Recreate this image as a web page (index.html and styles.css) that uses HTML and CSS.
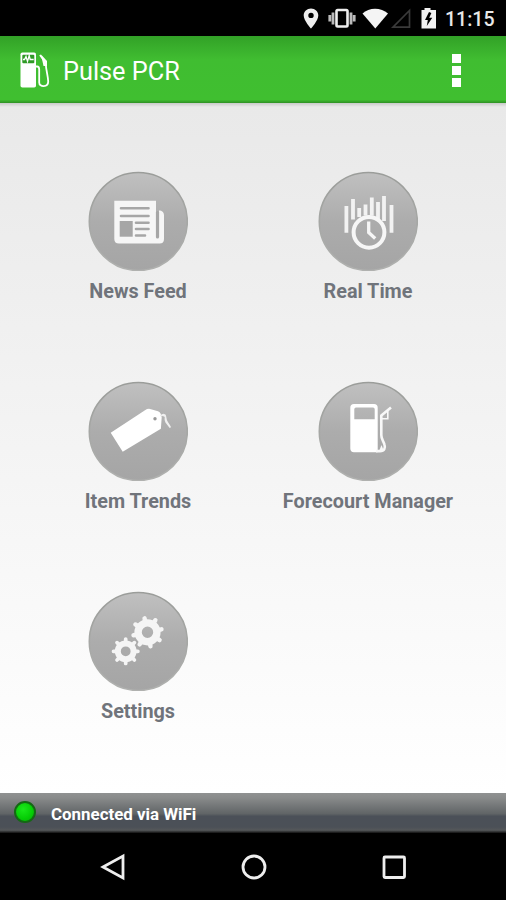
FILE: index.html
```html
<!DOCTYPE html>
<html lang="en">
<head>
    <meta charset="UTF-8">
    <meta name="viewport" content="width=device-width, initial-scale=1.0">
    <title>Pulse PCR</title>
    <link rel="stylesheet" href="styles.css">
</head>
<body>
    <div class="screen">
        <div class="status-bar">
            <svg class="status-icons" width="150" height="36" viewBox="0 0 150 36">
                <path fill="#eee" fill-rule="evenodd" d="M11 8.500c-4 0-7.300 3-7.300 7 0 5 7.300 13 7.300 13s7.300-8 7.300-13c0-4-3.300-7-7.300-7zm0 4.200a2.700 2.700 0 1 1 0 5.400 2.700 2.700 0 0 1 0-5.400z"/>
                <rect x="36.500" y="10" width="11" height="16.500" rx="1.200" fill="none" stroke="#eee" stroke-width="2.600"/>
                <path stroke="#bbb" stroke-width="2.800" d="M33 12.500v12M51 12.500v12M29.800 15v6.500M54.200 15v6.500"/>
                <path fill="#f4f4f4" d="M62.500 13.500c6.500-6.500 18.500-6.500 25.500 0L75.300 28.500z"/>
                <path fill="none" stroke="#3a3a3a" stroke-width="1.700" d="M93 27.200h16.500V10.500z"/>
                <path fill="#f2f2f2" d="M121.500 10h3V8h6v2h5.500v18.500h-14.500z"/>
                <path fill="#000" d="M129 12l-4 8h2.800l-1 6 5.500-8.200h-3.100l2.200-4.800z"/>
            </svg>
            <span class="clock">11:15</span>
        </div>

        <div class="app-bar">
            <svg class="app-logo" width="32" height="38" viewBox="0 0 32 38">
                <rect x="1.500" y="1.500" width="15.500" height="35" rx="1.800" fill="#fff"/>
                <rect x="3.300" y="3.700" width="12" height="8.500" rx="1" fill="#2f9a26"/>
                <path fill="none" stroke="#fff" stroke-width="1.300" d="M4 8.500h1.500l1.500-3 1.500 5 1.700-6 1 4h3.500"/>
                <path fill="none" stroke="#fff" stroke-width="1.800" d="M16 15.500h2.200c1.800 0 2 1 2 3v13c0 5 9 5 9-1 0-5-2.200-11-2.500-18.500L21 4"/>
                <path fill="#fff" d="M22 3.500l6 6.500v5h-3.500z"/>
            </svg>
            <h1 class="app-title">Pulse PCR</h1>
            <div class="menu-btn"><i></i><i></i><i></i></div>
        </div>

        <div class="menu-grid">
            <div class="menu-item">
                <svg class="menu-icon" viewBox="0 0 100 100">
                    <defs>
                        <linearGradient id="disc" x1="0" y1="0" x2="0" y2="1">
                            <stop offset="0" stop-color="#c0c0c0"/>
                            <stop offset="0.500" stop-color="#acacac"/>
                            <stop offset="1" stop-color="#a5a5a5"/>
                        </linearGradient>
                        <linearGradient id="rim" x1="0" y1="0" x2="0" y2="1">
                            <stop offset="0" stop-color="#9b9d9a"/>
                            <stop offset="1" stop-color="#b0b1af"/>
                        </linearGradient>
                    </defs>
                    <circle class="disc" cx="50.300" cy="50.500" r="49"/>
                    <path fill="#f6f6f6" d="M26.300 29.700H68V42h3v-2.500c3 0 5 1.500 5 5V68c0 3-1.500 4.500-4.500 4.500H31c-3 0-4.700-1.500-4.700-4.500z"/>
                    <path stroke="#a6a6a6" stroke-width="2.600" stroke-linecap="round" d="M33 37.300h27.500M33 45h27.500M48 51.700h12.500M48 58h12.500M48 64.500h9"/>
                    <path stroke="#a6a6a6" stroke-width="3.200" stroke-linecap="round" d="M69.500 41.500v24.500"/>
                    <rect x="31.700" y="50" width="13" height="15.700" fill="#a6a6a6"/>
                </svg>
                <span class="menu-label">News Feed</span>
            </div>

            <div class="menu-item">
                <svg class="menu-icon" viewBox="0 0 100 100">
                    <circle class="disc" cx="50.300" cy="50.500" r="49"/>
                    <path stroke="#f2f2f2" stroke-width="3.800" d="M28.400 35v26.700M35 28v20.500M41.200 37v9M47.500 33.500v11M53.800 26.500v18M60 31v17M66 25v25M73.500 34v27.700"/>
                    <circle cx="51" cy="61.300" r="15.400" fill="none" stroke="#f6f6f6" stroke-width="4"/>
                    <path fill="none" stroke="#f6f6f6" stroke-width="3.300" d="M50.700 50.500V61.500l6.500 6"/>
                </svg>
                <span class="menu-label">Real Time</span>
            </div>

            <div class="menu-item">
                <svg class="menu-icon" viewBox="0 0 100 100">
                    <circle class="disc" cx="50.300" cy="50.500" r="49"/>
                    <path fill="#fff" d="M22.700 51.700L57 29.200q3-2 6-1L70 30.200q2 .5 2.700 2.500l1 3.500-.8 11.600L34.700 70.800z"/>
                    <circle cx="67" cy="37.700" r="1.700" fill="#999"/>
                    <path fill="none" stroke="#f0f0f0" stroke-width="1.400" d="M72.500 35c3-2.500 5-1.500 5 .5s-1 3.500.5 5.500l4.200 5.500M72 34.500c4-1 6 1 6 3.500s2 3.500 4.500 8.500"/>
                </svg>
                <span class="menu-label">Item Trends</span>
            </div>

            <div class="menu-item">
                <svg class="menu-icon" viewBox="0 0 100 100">
                    <circle class="disc" cx="50.300" cy="50.500" r="49"/>
                    <path fill="#fff" fill-rule="evenodd" d="M36 23h20q3.700 0 3.700 3.700V71.300H36q-3.700 0-3.700-3.700V26.700Q32.300 23 36 23zM38 26.500q-1.700 0-1.700 1.700v10.100h20.400V28.200q0-1.700-1.700-1.700z"/>
                    <path fill="none" stroke="#f8f8f8" stroke-width="2.600" stroke-linejoin="round" d="M58 70.100h4c4.500 0 5.500-3 4.500-6.500-1-4-3.200-5-3.200-9.600V34.500L73 26.500"/>
                    <path fill="none" stroke="#f8f8f8" stroke-width="1.600" d="M64 37.800h5.800v-8"/>
                    <path fill="#f8f8f8" d="M61.500 69l2-5 2 5z"/>
                </svg>
                <span class="menu-label">Forecourt Manager</span>
            </div>

            <div class="menu-item">
                <svg class="menu-icon" viewBox="0 0 100 100">
                    <circle class="disc" cx="50.300" cy="50.500" r="49"/>
                    <!-- each gear is a ring plus eight round-ended teeth -->
                    <g fill="none" stroke="#f5f5f5" stroke-linecap="round">
                        <circle cx="59.500" cy="41.300" r="9.400" stroke-width="7.400"/>
                        <path stroke-width="4.400" transform="translate(59.500 41.300) rotate(-12)" d="M11 0h3.300M-11 0h-3.300M0 11v3.300M0-11v-3.300M8 8l2.200 2.200M-8-8l-2.200-2.200M8-8l2.200-2.200M-8 8l-2.200 2.200"/>
                        <circle cx="37.700" cy="60.300" r="7.900" stroke-width="6"/>
                        <path stroke-width="3.700" transform="translate(37.700 60.300)" d="M9.500 0h2.700M-9.500 0h-2.700M0 9.500v2.700M0-9.500v-2.700M7 7l1.700 1.700M-7-7l-1.700-1.700M7-7l1.700-1.700M-7 7l-1.700 1.700"/>
                    </g>
                </svg>
                <span class="menu-label">Settings</span>
            </div>
        </div>

        <div class="connection">
            <span class="led"></span>
            <span class="connection-text">Connected via WiFi</span>
        </div>

        <div class="nav-bar">
            <svg width="28" height="28" viewBox="0 0 28 28"><path d="M4 14L24 3v22z"/></svg>
            <svg width="28" height="28" viewBox="0 0 28 28"><circle cx="14" cy="14" r="11"/></svg>
            <svg width="28" height="28" viewBox="0 0 28 28"><rect x="4" y="4" width="20.500" height="20.500" rx="1"/></svg>
        </div>
    </div>
</body>
</html>
```
FILE: styles.css
```css
* {
    margin: 0;
    padding: 0;
    box-sizing: border-box;
}

body {
    font-family: Roboto, "Liberation Sans", sans-serif;
    background: #000;
}

.screen {
    display: grid;
    grid-template-rows: 36px 67px 690px 40px 67px;
    width: 506px;
    height: 900px;
    overflow: hidden;
}

.status-bar {
    display: flex;
    align-items: center;
    justify-content: flex-end;
    padding-right: 11px;
    background: #000;
    color: #e8e8e8;
}

.clock {
    width: 50px;
    margin-left: -5px;
    padding-top: 2px;
    font-size: 19.5px;
    font-weight: 500;
    white-space: nowrap;
}

.app-bar {
    display: flex;
    align-items: center;
    padding: 0 45px 0 19px;
    background: linear-gradient(#32a127, #40bd31 35%, #40bf30 95%, #2e9024);
    color: #fff;
}

.app-logo {
    margin-top: 1px;
}

.app-title {
    flex: 1;
    margin-left: 12px;
    padding-top: 3px;
    font-size: 25.3px;
    font-weight: 400;
}

.menu-btn {
    display: flex;
    flex-direction: column;
    gap: 3px;
    padding-top: 2px;
}

.menu-btn i {
    width: 9px;
    height: 9px;
    background: #fff;
}

.menu-grid {
    display: grid;
    grid-template-columns: 230px 230px;
    grid-auto-rows: 210px;
    padding: 68px 0 0 23px;
    background: linear-gradient(#c9c9c9, #e9e9e9 4px, #ececec 15%, #f4f4f4 50%, #fff);
}

.menu-item {
    display: flex;
    flex-direction: column;
    align-items: center;
}

.menu-icon {
    width: 100px;
    height: 100px;
}

.disc {
    fill: url(#disc);
    stroke: url(#rim);
    stroke-width: 1.6;
}

.menu-label {
    margin-top: 9px;
    font-size: 19.8px;
    font-weight: 700;
    line-height: 24px;
    color: #70747b;
    white-space: nowrap;
}

.connection {
    display: flex;
    align-items: center;
    gap: 15px;
    padding-left: 14px;
    background: linear-gradient(#909292, #898b8b 12%, #606466 52%, #4b5058 58%, #4b5057 85%, #55585a 93%, #111);
    font-size: 16.9px;
    font-weight: 700;
    color: #fff;
}

.connection-text {
    padding-top: 2px;
}

.led {
    width: 22px;
    height: 22px;
    margin-top: -3px;
    border: 2px solid #146914;
    border-radius: 50%;
    background: radial-gradient(circle at 40% 35%, #1be81b, #05cc05 60%, #08a808);
}

.nav-bar {
    display: flex;
    justify-content: space-between;
    align-items: center;
    padding: 0 98px 0 99px;
    background: #000;
}

.nav-bar svg {
    fill: none;
    stroke: #eee;
    stroke-width: 2.8;
}
```
